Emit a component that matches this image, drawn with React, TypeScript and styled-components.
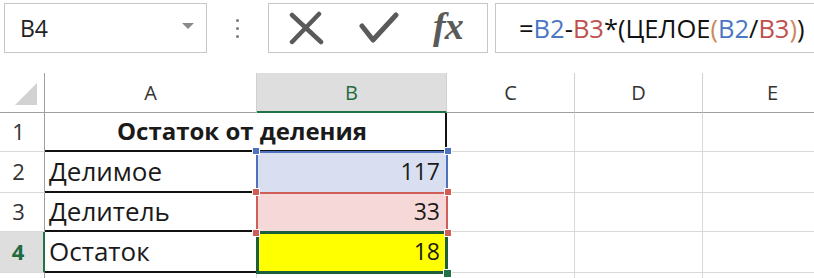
import React from "react";
import styled, { createGlobalStyle, css } from "styled-components";

const GlobalStyle = createGlobalStyle`
  html, body {
    margin: 0;
    padding: 0;
    background: #fff;
    overflow: hidden;
  }
  body {
    font-family: "Open Sans", "Noto Sans", sans-serif;
    color: #1a1a1a;
  }
`;

const Page = styled.div`
  width: 814px;
  height: 278px;
  overflow: hidden;
`;

/* ---------- formula bar ---------- */

const Toolbar = styled.div`
  display: flex;
  align-items: stretch;
  height: 50px;
  padding: 3px 0 0 4px;
  margin-bottom: 20px;
`;

const Box = styled.div`
  box-sizing: border-box;
  border: 1px solid #c6c6c6;
  background: #fff;
  height: 50px;
  display: flex;
  align-items: center;
`;

const NameBox = styled(Box)`
  width: 203px;
  padding: 0 12px 0 15px;
  justify-content: space-between;
  font-size: 23px;
  color: #222;
`;

const DropArrow = styled.span`
  width: 0;
  height: 0;
  border-left: 6px solid transparent;
  border-right: 6px solid transparent;
  border-top: 6px solid #8a8a8a;
  margin-top: -4px;
`;

const Dots = styled.div`
  width: 61px;
  display: flex;
  flex-direction: column;
  align-items: center;
  justify-content: center;
  gap: 5px;

  span {
    width: 3px;
    height: 3px;
    background: #7a7a7a;
    border-radius: 50%;
  }
`;

const ButtonBox = styled(Box)`
  width: 220px;
  padding: 0 0 0 19px;
  gap: 35px;
`;

const Fx = styled.span`
  font-family: "Liberation Serif", "DejaVu Serif", serif;
  font-style: italic;
  font-weight: bold;
  font-size: 38px;
  color: #5a5a5a;
  letter-spacing: -1px;
  margin-left: -1px;
  margin-top: -4px;
`;

const FormulaBox = styled(Box)`
  flex: 1;
  margin-left: 7px;
  margin-right: -20px;
  padding-left: 23px;
  font-size: 25.5px;
  color: #111;
  white-space: nowrap;
`;

const Ref = styled.span<{ $c: string }>`
  color: ${(p) => p.$c};
`;

/* ---------- sheet grid ---------- */

const Sheet = styled.div`
  display: grid;
  grid-template-columns: 45px 212px 190px 128px 128px 140px;
  grid-template-rows: 40px 39px 41px 39px 41px 40px;
`;

type CellProps = {
  $right?: string;
  $bottom?: string;
  $rw?: number;
  $bw?: number;
  $bg?: string;
  $align?: "left" | "center" | "right";
  $span?: number;
};

const Cell = styled.div<CellProps>`
  position: relative;
  box-sizing: border-box;
  display: flex;
  align-items: center;
  justify-content: ${(p) =>
    p.$align === "right" ? "flex-end" : p.$align === "center" ? "center" : "flex-start"};
  padding: 0 6px 2px 5px;
  background: ${(p) => p.$bg || "#fff"};
  border-right: ${(p) => p.$rw || 1}px solid ${(p) => p.$right || "#d9d9d9"};
  border-bottom: ${(p) => p.$bw || 1}px solid ${(p) => p.$bottom || "#d9d9d9"};
  font-size: 23px;
  ${(p) => p.$span && css`grid-column: span ${p.$span};`}
`;

const Label = styled(Cell)`
  font-size: 26px;
  padding-left: 4px;
`;

const ColHead = styled(Cell)<{ $sel?: boolean }>`
  justify-content: center;
  font-size: 20px;
  color: #333;
  padding: 0;
  border-right-color: #d0d0d0;
  border-bottom: 1px solid #9f9f9f;
  ${(p) =>
    p.$sel &&
    css`
      background: #dedede;
      color: #1f6b40;
      border-bottom: 2px solid #217346;
    `}
`;

const Corner = styled.div`
  box-sizing: border-box;
  display: flex;
  align-items: flex-end;
  justify-content: flex-end;
  padding: 0 7px 7px 0;
  background: #fff;
  border-right: 1px solid #9f9f9f;
  border-bottom: 1px solid #9f9f9f;
`;

const Triangle = styled.div`
  width: 22px;
  height: 22px;
  background: #d2d2d2;
  clip-path: polygon(100% 0, 100% 100%, 0 100%);
`;

const RowHead = styled(Cell)<{ $sel?: boolean }>`
  justify-content: center;
  padding: 0 7px 2px 0;
  font-size: 22px;
  color: #333;
  border-right: 1px solid #9f9f9f;
  ${(p) =>
    p.$sel &&
    css`
      background: #dedede;
      color: #1f6b40;
      font-weight: bold;
      border-right: 2px solid #217346;
    `}
`;

const Title = styled(Cell)`
  justify-content: center;
  font-weight: bold;
  font-size: 24px;
  padding-left: 0;
`;

/* coloured range outline drawn over a cell */
const Outline = styled.span<{ $c: string; $w?: number }>`
  position: absolute;
  left: -1px;
  top: -1px;
  right: -2px;
  bottom: -2px;
  border: ${(p) => p.$w || 2}px solid ${(p) => p.$c};
  pointer-events: none;
  z-index: 1;
`;

const Handle = styled.span<{ $c: string; $x: "l" | "r"; $y: "t" | "b"; $s?: number }>`
  position: absolute;
  width: ${(p) => p.$s || 8}px;
  height: ${(p) => p.$s || 8}px;
  background: ${(p) => p.$c};
  border: 1px solid #fff;
  box-sizing: border-box;
  z-index: 2;
  ${(p) => (p.$x === "l" ? "left: -5px;" : "right: -6px;")}
  ${(p) => (p.$y === "t" ? "top: -5px;" : "bottom: -6px;")}
`;

const BLUE = "#4f72c0";
const RED = "#cf5d58";
const GREEN = "#1d5e3a";
const BLACK = "#111";

const CrossIcon = () => (
  <svg width="36" height="34" viewBox="0 0 36 34">
    <path d="M4 4 L33 31 M31 3 L4 31" stroke="#5a5a5a" strokeWidth="4.5" strokeLinecap="round" fill="none" />
  </svg>
);

const CheckIcon = () => (
  <svg width="40" height="32" viewBox="0 0 40 32">
    <path d="M3 14 L14 28 L37 3" stroke="#5a5a5a" strokeWidth="5" strokeLinecap="round" strokeLinejoin="round" fill="none" />
  </svg>
);

export default function App() {
  return (
    <Page>
      <GlobalStyle />
      <Toolbar>
        <NameBox>
          B4
          <DropArrow />
        </NameBox>
        <Dots>
          <span />
          <span />
          <span />
        </Dots>
        <ButtonBox>
          <CrossIcon />
          <CheckIcon />
          <Fx>fx</Fx>
        </ButtonBox>
        <FormulaBox>
          =<Ref $c="#4a76c4">B2</Ref>-<Ref $c="#c0504d">B3</Ref>*(ЦЕЛОЕ
          <Ref $c="#c98a5e">(</Ref>
          <Ref $c="#4a76c4">B2</Ref>/<Ref $c="#c0504d">B3</Ref>
          <Ref $c="#c98a5e">)</Ref>)
        </FormulaBox>
      </Toolbar>

      <Sheet>
        <Corner>
          <Triangle />
        </Corner>
        <ColHead>A</ColHead>
        <ColHead $sel>B</ColHead>
        <ColHead>C</ColHead>
        <ColHead>D</ColHead>
        <ColHead>E</ColHead>

        <RowHead>1</RowHead>
        <Title $span={2} $right={BLACK} $rw={2} $bottom={BLACK} $bw={2}>
          Остаток от деления
        </Title>
        <Cell />
        <Cell />
        <Cell />

        <RowHead>2</RowHead>
        <Label $bottom={BLACK} $bw={2}>Делимое</Label>
        <Cell $align="right" $bg="#d9dff1">
          117
          <Outline $c={BLUE} />
          <Handle $c={BLUE} $x="l" $y="t" />
          <Handle $c={BLUE} $x="r" $y="t" />
        </Cell>
        <Cell />
        <Cell />
        <Cell />

        <RowHead>3</RowHead>
        <Label $bottom={BLACK} $bw={2}>Делитель</Label>
        <Cell $align="right" $bg="#f6d8d8">
          33
          <Outline $c={RED} />
          <Handle $c={RED} $x="l" $y="t" />
          <Handle $c={RED} $x="r" $y="t" />
          <Handle $c={RED} $x="l" $y="b" />
          <Handle $c={RED} $x="r" $y="b" />
        </Cell>
        <Cell />
        <Cell />
        <Cell />

        <RowHead $sel>4</RowHead>
        <Label $bottom={BLACK} $bw={2}>Остаток</Label>
        <Cell $align="right" $bg="#ffff00">
          18
          <Outline $c={GREEN} $w={3} />
          <Handle $c="#217346" $x="r" $y="b" $s={9} />
        </Cell>
        <Cell />
        <Cell />
        <Cell />

        <RowHead />
        <Cell />
        <Cell />
        <Cell />
        <Cell />
        <Cell />
      </Sheet>
    </Page>
  );
}
